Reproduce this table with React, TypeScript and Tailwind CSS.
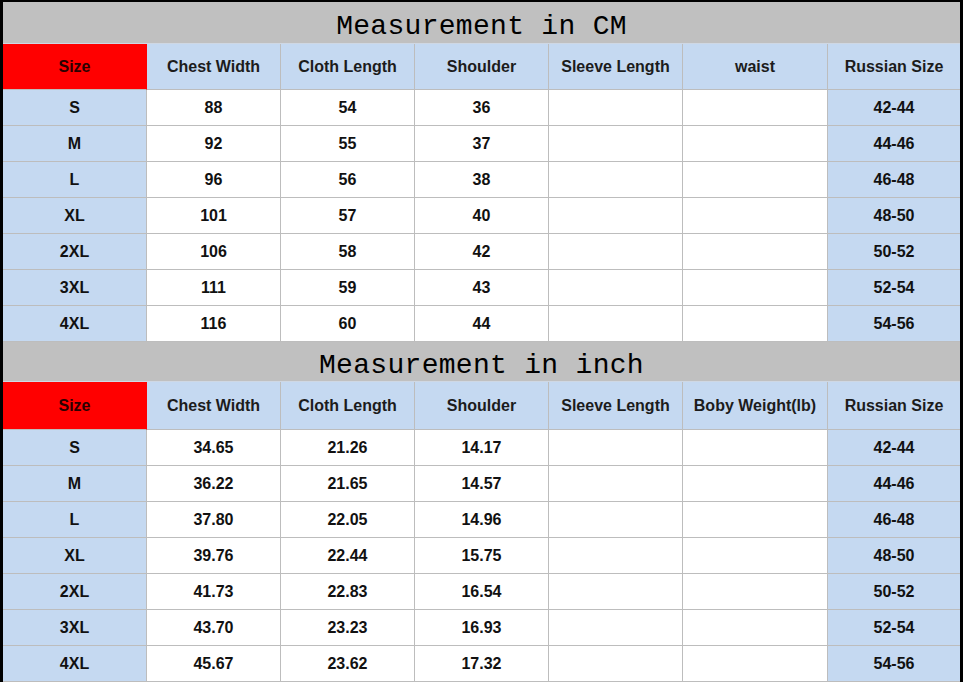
import React from "react";

const widthCls = ["w-[144px]", "w-[134px]", "w-[134px]", "w-[134px]", "w-[134px]", "w-[145px]", "w-[132px]"];

const cm = [
  ["S", "88", "54", "36", "", "", "42-44"],
  ["M", "92", "55", "37", "", "", "44-46"],
  ["L", "96", "56", "38", "", "", "46-48"],
  ["XL", "101", "57", "40", "", "", "48-50"],
  ["2XL", "106", "58", "42", "", "", "50-52"],
  ["3XL", "111", "59", "43", "", "", "52-54"],
  ["4XL", "116", "60", "44", "", "", "54-56"],
];

const inch = [
  ["S", "34.65", "21.26", "14.17", "", "", "42-44"],
  ["M", "36.22", "21.65", "14.57", "", "", "44-46"],
  ["L", "37.80", "22.05", "14.96", "", "", "46-48"],
  ["XL", "39.76", "22.44", "15.75", "", "", "48-50"],
  ["2XL", "41.73", "22.83", "16.54", "", "", "50-52"],
  ["3XL", "43.70", "23.23", "16.93", "", "", "52-54"],
  ["4XL", "45.67", "23.62", "17.32", "", "", "54-56"],
];

function Title({ text, h }: { text: string; h: string }) {
  return (
    <div className={`${h} bg-[#c0c0c0] border-b border-[#cfd8e4] flex items-center justify-center pt-[8px]`}>
      <span className="text-[28px] leading-none text-black tracking-[0.3px]" style={{ fontFamily: '"Liberation Mono", "DejaVu Sans Mono", monospace' }}>
        {text}
      </span>
    </div>
  );
}

function Header({ labels, h }: { labels: string[]; h: string }) {
  return (
    <div className={`flex ${h}`}>
      {labels.map((l, i) => (
        <div
          key={i}
          className={`${widthCls[i]} shrink-0 flex items-center justify-center border-b border-[#bdbdbd] ${i < 6 ? "border-r" : ""} ${i === 0 ? "bg-[#ff0000] text-[#2a0000] border-r-[#ff0000]" : "bg-[#c5d9f1] text-[#1c1c1c]"} font-bold text-[16px] pt-px`}
        >
          {l}
        </div>
      ))}
    </div>
  );
}

function Rows({ data }: { data: string[][] }) {
  return (
    <>
      {data.map((r, ri) => (
        <div key={ri} className="flex h-[36px]">
          {r.map((c, i) => (
            <div
              key={i}
              className={`${widthCls[i]} shrink-0 flex items-center justify-center border-b border-[#bdbdbd] ${i < 6 ? "border-r" : ""} ${i === 0 || i === 6 ? "bg-[#c5d9f1]" : "bg-white"} font-bold text-[16px] text-[#111] pt-px`}
            >
              {c}
            </div>
          ))}
        </div>
      ))}
    </>
  );
}

export default function App() {
  return (
    <div className="w-[963px] h-[684px] bg-white" style={{ fontFamily: '"Liberation Sans", Arial, sans-serif' }}>
      <div className="w-[963px] border-l-[3px] border-r-[3px] border-t-2 border-black">
        <Title text="Measurement in CM" h="h-[42px]" />
        <Header h="h-[46px]" labels={["Size", "Chest Width", "Cloth Length", "Shoulder", "Sleeve Length", "waist", "Russian Size"]} />
        <Rows data={cm} />
        <Title text="Measurement in inch" h="h-[40px]" />
        <Header h="h-[48px]" labels={["Size", "Chest Width", "Cloth Length", "Shoulder", "Sleeve Length", "Boby Weight(lb)", "Russian Size"]} />
        <Rows data={inch} />
      </div>
    </div>
  );
}
